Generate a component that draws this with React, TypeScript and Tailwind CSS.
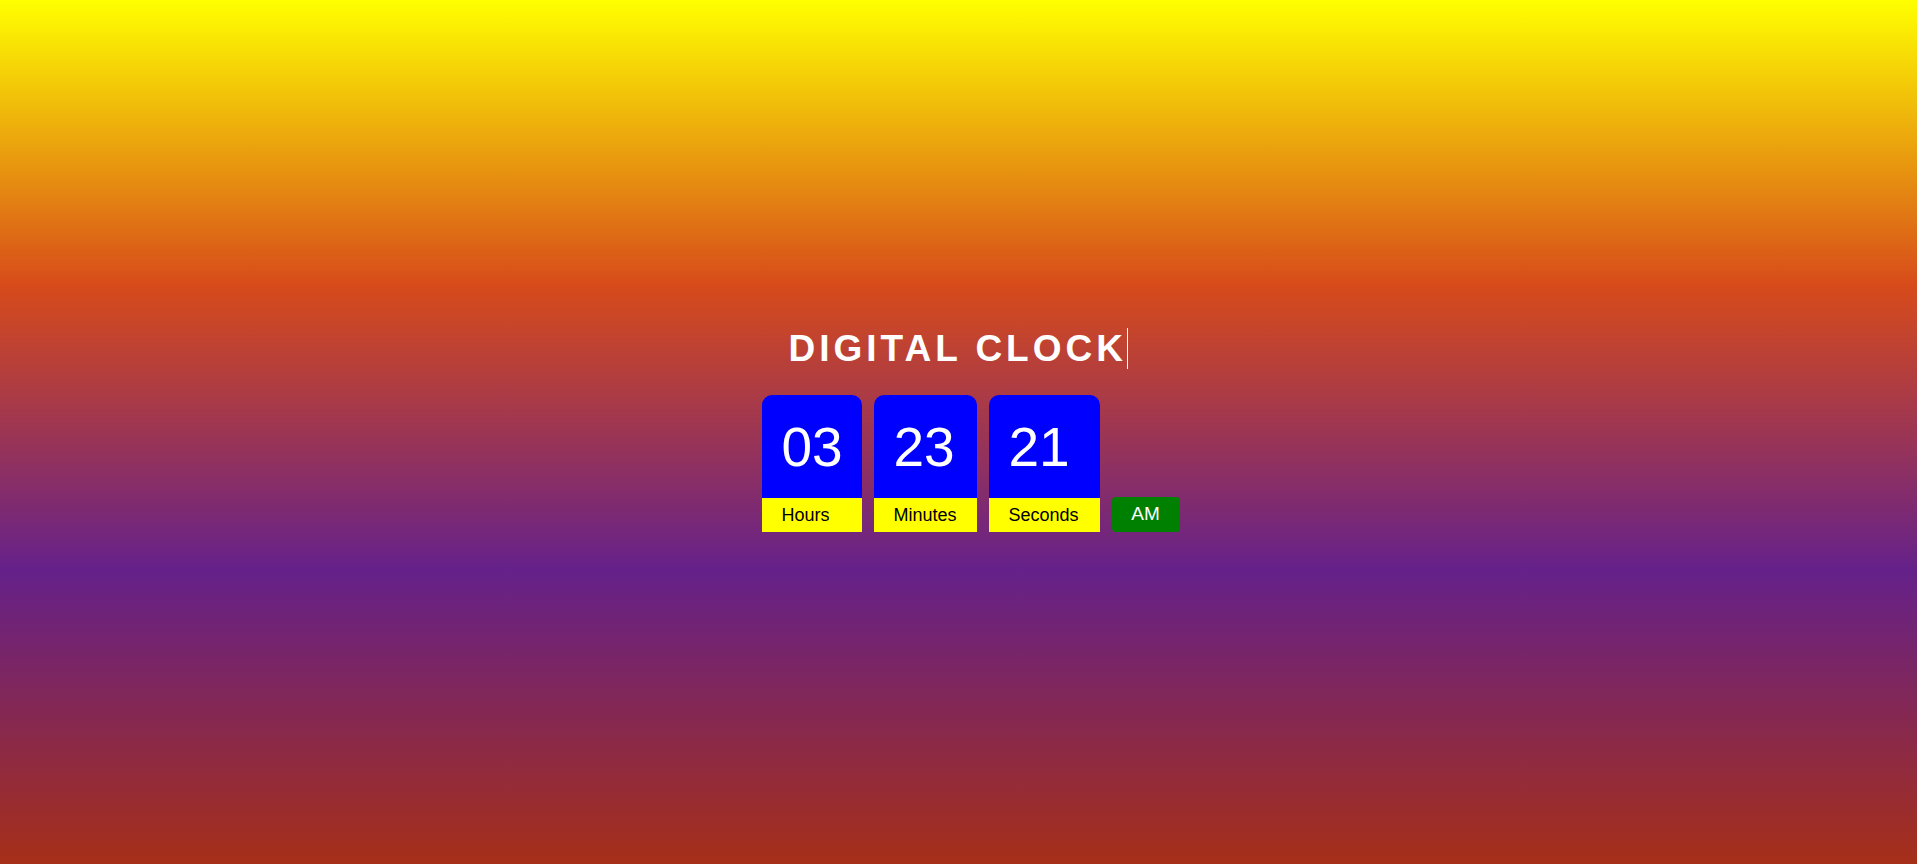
import React from "react";

const units = [
  { value: "03", label: "Hours", width: "w-[100px]" },
  { value: "23", label: "Minutes", width: "w-[103px]" },
  { value: "21", label: "Seconds", width: "w-[111px]" },
];

export default function App() {
  return (
    <div className="min-h-screen w-full flex flex-col items-center justify-center bg-[linear-gradient(to_bottom,#ffff00_0%,#d74b1a_33%,#65218a_66%,#a62f18_100%)] font-['Liberation_Sans',Arial,sans-serif]">
      <h1 className="flex items-center h-[41px] text-white text-[37px] font-bold tracking-[4px] leading-none">
        <span>DIGITAL CLOCK</span>
        <span className="w-[1.5px] h-[41px] bg-white" />
      </h1>

      <div className="flex items-end gap-[12px] mt-[26px] mb-[4px] pl-[24px]">
        {units.map((u) => (
          <div key={u.label} className={`flex flex-col ${u.width}`}>
            <div className="h-[103px] bg-[#0000ff] rounded-t-[10px] px-[20px] pt-[24px] text-white text-[55px] leading-[56px]">
              {u.value}
            </div>
            <div className="h-[34px] bg-[#ffff00] px-[20px] flex items-center text-black text-[18px]">
              {u.label}
            </div>
          </div>
        ))}
        <div className="h-[35px] w-[68px] bg-[#008000] rounded-[4px] flex items-center justify-center text-white text-[19px]">
          AM
        </div>
      </div>
    </div>
  );
}
